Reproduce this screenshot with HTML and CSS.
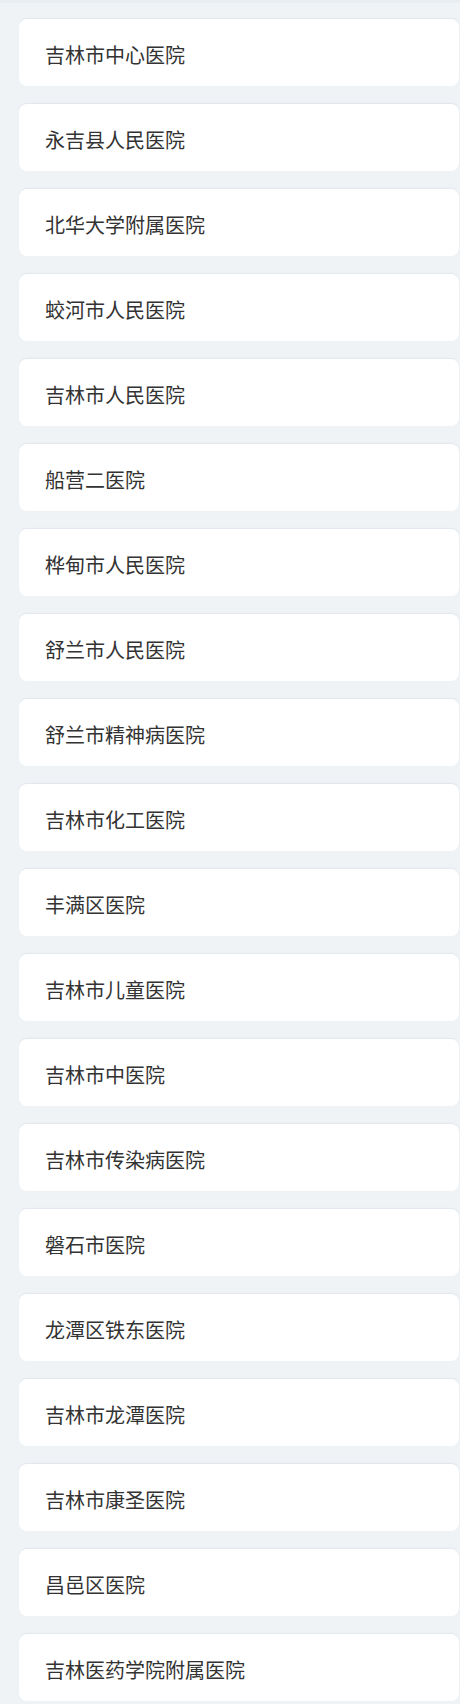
FILE: index.html
```html
<!DOCTYPE html>
<html lang="zh-CN">
<head>
<meta charset="utf-8">
<title>医院列表</title>
<link rel="stylesheet" href="styles.css">
</head>
<body>
<div class="list">
  <div class="card">吉林市中心医院</div>
  <div class="card">永吉县人民医院</div>
  <div class="card">北华大学附属医院</div>
  <div class="card">蛟河市人民医院</div>
  <div class="card">吉林市人民医院</div>
  <div class="card">船营二医院</div>
  <div class="card">桦甸市人民医院</div>
  <div class="card">舒兰市人民医院</div>
  <div class="card">舒兰市精神病医院</div>
  <div class="card">吉林市化工医院</div>
  <div class="card">丰满区医院</div>
  <div class="card">吉林市儿童医院</div>
  <div class="card">吉林市中医院</div>
  <div class="card">吉林市传染病医院</div>
  <div class="card">磐石市医院</div>
  <div class="card">龙潭区铁东医院</div>
  <div class="card">吉林市龙潭医院</div>
  <div class="card">吉林市康圣医院</div>
  <div class="card">昌邑区医院</div>
  <div class="card">吉林医药学院附属医院</div>
</div>
</body>
</html>
```

FILE: styles.css
```css
html, body {
  margin: 0;
  padding: 0;
  background: #eff3f6;
}
body {
  font-family: "Noto Sans CJK SC", "Noto Sans", sans-serif;
  border-top: 3px solid #e9eef2;
}
.list {
  display: flex;
  flex-direction: column;
  gap: 18px;
  padding: 16px 1px 0 19px;
}
.card {
  height: 67px;
  box-sizing: border-box;
  background: #ffffff;
  border-radius: 8px;
  box-shadow: 0 -1px 1px rgba(200, 210, 220, 0.35);
  display: flex;
  align-items: center;
  padding: 3px 0 0 26px;
  font-size: 20px;
  color: #333333;
}
```
